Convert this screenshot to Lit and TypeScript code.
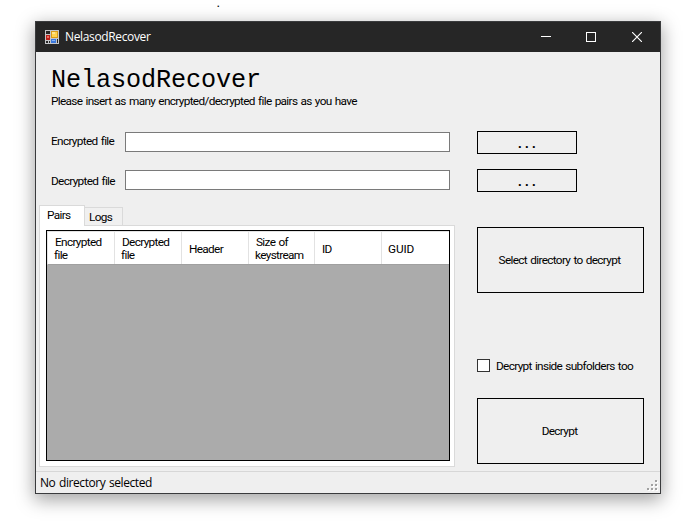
import { LitElement, html, css, svg } from "lit";
import { customElement } from "lit/decorators.js";

const COLUMNS = [
  ["Encrypted", "file"],
  ["Decrypted", "file"],
  ["Header"],
  ["Size of", "keystream"],
  ["ID"],
  ["GUID"],
];
const GRIP = [[8, 0], [4, 4], [8, 4], [0, 8], [4, 8], [8, 8]];

@customElement("app-root")
export class AppRoot extends LitElement {
  static styles = css`
    :host {
      display: block;
      box-sizing: border-box;
      width: 694px;
      height: 523px;
      overflow: hidden;
      background: #fff;
      color: #000;
      font: 11.8px/13px Roboto, "Liberation Sans", sans-serif;
      letter-spacing: -0.66px;
      word-spacing: 0.9px;
      position: relative;
    }
    * { box-sizing: border-box; }
    svg { display: block; flex: none; }
    .speck {
      position: absolute;
      left: 217px;
      top: 0;
      font: bold 9px/9px "Liberation Sans", sans-serif;
    }
    .window {
      width: 626px;
      height: 473px;
      margin: 21px 0 0 35px;
      border: 1px solid #3a3b3d;
      background: #efefef;
      display: flex;
      flex-direction: column;
      box-shadow: 0 5px 17px 1px rgba(0, 0, 0, 0.36);
    }
    .page { display: flow-root; }
    .titlebar {
      height: 30px;
      flex: none;
      background: #262626;
      color: #fff;
      display: flex;
      align-items: center;
      padding-left: 9px;
    }
    .caption {
      flex: 1;
      margin-left: 6px;
      font: 12px/16px "Open Sans", "Noto Sans", sans-serif;
      letter-spacing: -0.36px;
    }
    .control { width: 46px; display: flex; justify-content: center; }
    .control.min { width: 44px; }
    .client { flex: 1; display: flex; min-height: 0; }
    .left { width: 416px; margin-left: 3px; display: flex; flex-direction: column; }
    .name {
      margin: 17px 0 0 12px;
      height: 25px;
      font: 25.2px/24px "Liberation Mono", monospace;
      letter-spacing: -0.12px;
      white-space: nowrap;
    }
    .hint { margin: 1px 0 0 12px; height: 13px; white-space: nowrap; }
    .field { display: flex; align-items: center; height: 20px; margin-left: 12px; }
    .field.first { margin-top: 24px; }
    .field.second { margin-top: 18px; }
    .label { width: 74px; white-space: nowrap; }
    .first .label { padding-bottom: 1px; }
    .second .label { padding-top: 2px; }
    .input { width: 325px; height: 20px; border: 1px solid #7a7a7a; background: #fff; }
    .tabs { display: flex; align-items: flex-end; height: 21px; margin-top: 15px; margin-bottom: -1px; z-index: 1; }
    .tab { border: 1px solid #dadada; }
    .tab.on { width: 46px; height: 21px; border-bottom: 0; background: #fff; padding: 3px 0 0 7px; }
    .tab.off { width: 38px; height: 19px; border-left: 0; padding: 3px 0 0 4px; background: #f0f0f0; }
    .panel { height: 242px; border: 1px solid #dadada; background: #fff; padding: 4px 4px 5px 6px; }
    .table { height: 231px; border: 1px solid #000; background: #ababab; }
    .head {
      height: 34px;
      display: grid;
      grid-template-columns: 67px 67px 67px 66px 67px 1fr;
      background: #fff;
      border: 1px solid #e3e3e3;
      border-right: 0;
      border-bottom-color: #a0a0a0;
    }
    .cell {
      display: flex;
      flex-direction: column;
      justify-content: center;
      padding: 2px 0 0 7px;
      border-right: 1px solid #e2e2e2;
      white-space: nowrap;
    }
    .cell:last-child { border-right: 0; letter-spacing: -0.1px; padding-left: 6px; }
    .two { padding-left: 6px; }
    .two .line:first-child { padding-left: 1px; }
    .right { width: 167px; margin-left: 22px; display: flex; flex-direction: column; }
    .button {
      display: flex;
      align-items: center;
      justify-content: center;
      border: 1px solid #000;
      height: 66px;
    }
    .browse { width: 100px; height: 23px; font: bold 13px/13px "Liberation Sans", sans-serif; letter-spacing: 3.4px; padding: 1px 0 0 3px; }
    .b1 { margin-top: 79px; }
    .b2 { margin-top: 15px; }
    .b3 { margin-top: 35px; padding-right: 2px; }
    .b4 { margin-top: 26px; padding-right: 2px; }
    .check { display: flex; align-items: center; height: 13px; margin-top: 66px; white-space: nowrap; }
    .check-label { padding-top: 2px; }
    .box { width: 13px; height: 13px; border: 1px solid #333; background: #fff; margin-right: 6px; flex: none; }
    .status {
      height: 22px;
      flex: none;
      display: flex;
      justify-content: space-between;
      border-top: 1px solid #d7d7d7;
      padding: 0 2px 0 4px;
      font: 12px/22px "Open Sans", "Noto Sans", sans-serif;
      letter-spacing: -0.42px;
    }
    .grip { margin-top: 8px; }
  `;

  render() {
    return html`
      <div class="page">
        <div class="speck">.</div>
        <div class="window">
          <div class="titlebar">
            <svg width="14" height="14" shape-rendering="crispEdges">
              <rect width="14" height="14" fill="#c4c6c9" />
              <rect x="1" y="1" width="4" height="3" fill="#262626" />
              <rect x="1" y="5" width="4" height="5" fill="#b91f1a" />
              <rect x="2" y="6" width="2" height="2" fill="#ee6e60" />
              <rect x="6" y="1" width="7" height="7" fill="#d89b16" />
              <rect x="7" y="2" width="5" height="5" fill="#ffd24d" />
              <rect x="7" y="2" width="3" height="2" fill="#ffe58d" />
              <rect x="1" y="11" width="2" height="2" fill="#262626" />
              <rect x="4" y="11" width="1" height="2" fill="#262626" />
              <rect x="6" y="9" width="5" height="4" fill="#3b78dc" />
              <rect x="7" y="10" width="3" height="1" fill="#8ab5f6" />
              <rect x="12" y="9" width="1" height="4" fill="#262626" />
            </svg>
            <div class="caption">NelasodRecover</div>
            <div class="control min"><svg width="10" height="10"><path d="M0 4.5H10" stroke="#fff" /></svg></div>
            <div class="control"><svg width="10" height="10"><rect x=".5" y=".5" width="9" height="9" fill="none" stroke="#fff" /></svg></div>
            <div class="control"><svg width="10" height="10"><path d="M0 0L10 10M10 0L0 10" stroke="#fff" stroke-width="1.15" /></svg></div>
          </div>
          <div class="client">
            <div class="left">
              <div class="name">NelasodRecover</div>
              <div class="hint">Please insert as many encrypted/decrypted file pairs as you have</div>
              <div class="field first"><div class="label">Encrypted file</div><div class="input"></div></div>
              <div class="field second"><div class="label">Decrypted file</div><div class="input"></div></div>
              <div class="tabs"><div class="tab on">Pairs</div><div class="tab off">Logs</div></div>
              <div class="panel">
                <div class="table">
                  <div class="head">
                    ${COLUMNS.map((lines) => html`<div class="cell ${lines.length > 1 ? "two" : ""}">${lines.map((t) => html`<div class="line">${t}</div>`)}</div>`)}
                  </div>
                </div>
              </div>
            </div>
            <div class="right">
              <div class="button browse b1">...</div>
              <div class="button browse b2">...</div>
              <div class="button b3">Select directory to decrypt</div>
              <div class="check"><div class="box"></div><div class="check-label">Decrypt inside subfolders too</div></div>
              <div class="button b4">Decrypt</div>
            </div>
          </div>
          <div class="status">
            <div>No directory selected</div>
            <svg class="grip" width="11" height="11" shape-rendering="crispEdges">
              ${GRIP.map(([x, y]) => svg`<rect x=${x + 1} y=${y + 1} width="2" height="2" fill="#fff" /><rect x=${x} y=${y} width="2" height="2" fill="#a0a0a0" />`)}
            </svg>
          </div>
        </div>
      </div>
    `;
  }
}
